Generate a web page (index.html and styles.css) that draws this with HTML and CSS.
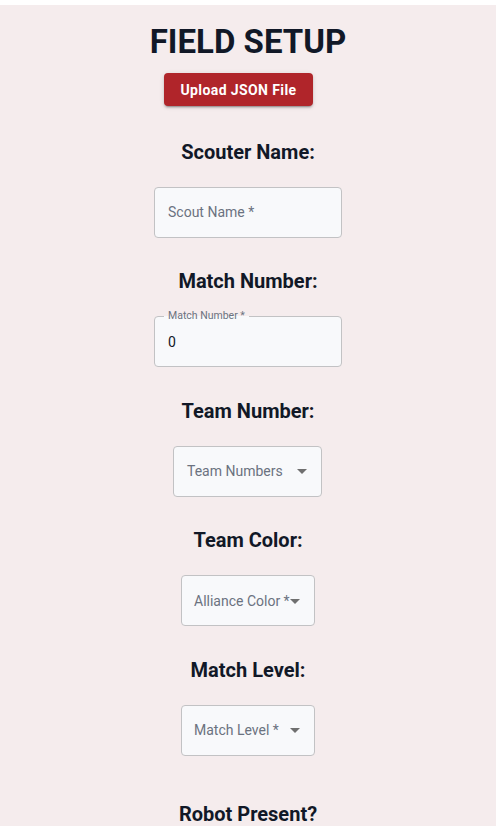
FILE: index.html
```html
<!DOCTYPE html>
<html lang="en">
<head>
<meta charset="utf-8">
<title>Field Setup</title>
<link rel="stylesheet" href="styles.css">
</head>
<body>
<div class="page">
  <h1 class="title">FIELD SETUP</h1>
  <button class="upload-btn" type="button">Upload JSON File</button>

  <section class="field">
    <h2 class="field-label">Scouter Name:</h2>
    <div class="input-box input-wide"><span class="placeholder">Scout Name *</span></div>
  </section>

  <section class="field">
    <h2 class="field-label">Match Number:</h2>
    <div class="input-box input-wide">
      <span class="floating">Match Number *</span>
      <span class="value">0</span>
    </div>
  </section>

  <section class="field">
    <h2 class="field-label">Team Number:</h2>
    <div class="input-box select select-team">
      <span class="placeholder">Team Numbers</span>
      <svg class="arrow" viewBox="0 0 24 24" width="24" height="24"><path d="M7 10l5 5 5-5z"/></svg>
    </div>
  </section>

  <section class="field">
    <h2 class="field-label">Team Color:</h2>
    <div class="input-box select select-narrow">
      <span class="placeholder">Alliance Color *</span>
      <svg class="arrow" viewBox="0 0 24 24" width="24" height="24"><path d="M7 10l5 5 5-5z"/></svg>
    </div>
  </section>

  <section class="field">
    <h2 class="field-label">Match Level:</h2>
    <div class="input-box select select-narrow">
      <span class="placeholder">Match Level *</span>
      <svg class="arrow" viewBox="0 0 24 24" width="24" height="24"><path d="M7 10l5 5 5-5z"/></svg>
    </div>
  </section>

  <section class="field field-robot">
    <h2 class="field-label">Robot Present?</h2>
  </section>
</div>
</body>
</html>
```

FILE: styles.css
```css
html, body {
  margin: 0;
  padding: 0;
  background: #ffffff;
  overflow: hidden;
}

.page {
  margin: 5px 4px 0 0;
  width: 496px;
  height: 821px;
  overflow: hidden;
  background: #f5eced;
  padding-top: 15px;
  box-sizing: border-box;
  display: flex;
  flex-direction: column;
  align-items: center;
  font-family: Roboto, "Liberation Sans", sans-serif;
  color: #111827;
}

.title {
  margin: 0;
  font-size: 33px;
  line-height: 43px;
  font-weight: 700;
  color: #111827;
}

.upload-btn {
  margin: 10px 19px 2px 0;
  height: 36px;
  padding: 0 16px;
  border: none;
  border-radius: 4px;
  background: #b0252a;
  color: #ffffff;
  font-family: Roboto, "Liberation Sans", sans-serif;
  font-size: 14px;
  font-weight: 700;
  letter-spacing: 0.4px;
  box-shadow: 0 3px 1px -2px rgba(0,0,0,0.2), 0 2px 2px 0 rgba(0,0,0,0.14), 0 1px 5px 0 rgba(0,0,0,0.12);
}

.field {
  margin-top: 31.5px;
  display: flex;
  flex-direction: column;
  align-items: center;
}

.field-robot {
  margin-top: 46.5px;
}

.field-label {
  margin: 0;
  font-size: 20px;
  line-height: 24px;
  font-weight: 700;
  color: #111827;
}

.input-box {
  position: relative;
  margin-top: 23px;
  height: 51px;
  box-sizing: border-box;
  border: 1px solid #c2c2c4;
  border-radius: 4px;
  background: #f8f9fb;
  display: flex;
  align-items: center;
  padding-left: 13px;
  font-size: 14px;
  white-space: nowrap;
}

.input-wide {
  width: 188px;
}

.select-team {
  width: 149px;
  margin-right: 1px;
}

.select-narrow {
  width: 134px;
  padding-left: 12px;
}

.placeholder {
  color: #6b7280;
}

.value {
  color: #111827;
  font-size: 14px;
}

.floating {
  position: absolute;
  left: 9px;
  top: -8px;
  padding: 0 4px;
  font-size: 10.5px;
  line-height: 14px;
  color: #6b7280;
  background: linear-gradient(to bottom, #f5eced 50%, #f8f9fb 50%);
}

.arrow {
  position: absolute;
  right: 7px;
  top: 50%;
  transform: translateY(-50%);
  fill: #6f6f6f;
}
```
